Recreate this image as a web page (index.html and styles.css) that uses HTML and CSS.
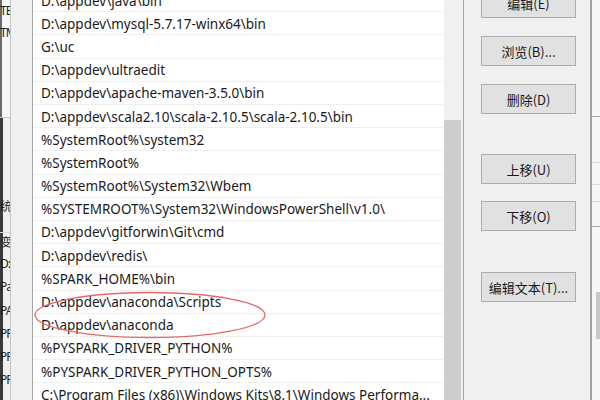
FILE: index.html
```html
<!DOCTYPE html>
<html>
<head>
<meta charset="utf-8">
<link rel="stylesheet" href="styles.css">
</head>
<body>
<div class="screen">
  <div class="bg-left">
    <div class="bl-top">
      <div class="bl-row">TE</div>
      <div class="bl-row">TM</div>
    </div>
    <div class="bl-mid">
      <div class="bl-label">统</div>
      <div class="bl-head">变</div>
      <div class="bl-row">D:</div>
      <div class="bl-row">Pa</div>
      <div class="bl-row">PA</div>
      <div class="bl-row">PF</div>
      <div class="bl-row">PF</div>
      <div class="bl-row">PF</div>
    </div>
  </div>
  <div class="dialog">
    <div class="pad"></div>
    <div class="listbox">
      <div class="rows">
        <div class="row">D:\appdev\java\bin</div>
        <div class="row">D:\appdev\mysql-5.7.17-winx64\bin</div>
        <div class="row">G:\uc</div>
        <div class="row">D:\appdev\ultraedit</div>
        <div class="row">D:\appdev\apache-maven-3.5.0\bin</div>
        <div class="row">D:\appdev\scala2.10\scala-2.10.5\scala-2.10.5\bin</div>
        <div class="row">%SystemRoot%\system32</div>
        <div class="row">%SystemRoot%</div>
        <div class="row">%SystemRoot%\System32\Wbem</div>
        <div class="row">%SYSTEMROOT%\System32\WindowsPowerShell\v1.0\</div>
        <div class="row">D:\appdev\gitforwin\Git\cmd</div>
        <div class="row">D:\appdev\redis\</div>
        <div class="row">%SPARK_HOME%\bin</div>
        <div class="row">D:\appdev\anaconda\Scripts</div>
        <div class="row">D:\appdev\anaconda</div>
        <div class="row">%PYSPARK_DRIVER_PYTHON%</div>
        <div class="row">%PYSPARK_DRIVER_PYTHON_OPTS%</div>
        <div class="row">C:\Program Files (x86)\Windows Kits\8.1\Windows Performa...</div>
      </div>
      <div class="scrollbar"><div class="thumb"></div></div>
    </div>
    <div class="side">
      <div class="btn b1">编辑(E)</div>
      <div class="btn b2">浏览(B)...</div>
      <div class="btn b3">删除(D)</div>
      <div class="btn b4">上移(U)</div>
      <div class="btn b5">下移(O)</div>
      <div class="btn b6">编辑文本(T)...</div>
    </div>
  </div>
  <div class="bg-right">
    <div class="br-a"></div>
    <div class="br-b"></div>
    <div class="br-c"></div>
    <div class="br-d"></div>
    <div class="br-e"></div>
    <div class="br-thumb"></div>
  </div>
  <svg class="mark" width="600" height="400" viewBox="0 0 600 400">
    <ellipse cx="150" cy="315" rx="115" ry="22.5" fill="none" stroke="#e46a6a" stroke-width="1.3"/>
  </svg>
</div>
</body>
</html>
```

FILE: styles.css
```css
* { box-sizing: border-box; margin: 0; padding: 0; }
html, body { width: 600px; height: 400px; overflow: hidden; background: #f0f0f0; }
body {
  font-family: "Noto Sans", "Noto Sans CJK SC", sans-serif;
  color: #1a1a1a;
}
.screen {
  position: relative;
  display: flex;
  width: 600px;
  height: 400px;
  overflow: hidden;
  background: #f0f0f0;
}

/* background window, left */
.bg-left {
  flex: none;
  width: 10px;
  height: 400px;
  overflow: hidden;
  display: flex;
  flex-direction: column;
  font-size: 12px;
  color: #222;
  white-space: nowrap;
  background: #f0f0f0;
}
.bl-top {
  height: 117px;
  flex: none;
  background: #f7f7f7;
  box-shadow: inset 2px 0 0 #6a6a6a;
}
.bl-row {
  height: 22px;
  line-height: 22px;
  flex: none;
  letter-spacing: -1px;
}
.bl-mid {
  border-top: 1px solid #c8c8c8;
  flex: 1;
  display: flex;
  flex-direction: column;
  box-shadow: inset 3px 0 0 #3a3a3a;
}
.bl-label {
  margin-top: 80px;
  height: 18px;
  line-height: 18px;
}
.bl-head {
  margin-top: 16px;
  height: 20px;
  line-height: 20px;
  border-top: 1px solid #d8d8d8;
}
.bl-mid .bl-row { height: 23.3px; line-height: 23.3px; }

/* front dialog */
.dialog {
  flex: none;
  width: 582px;
  height: 400px;
  display: flex;
  background: #f0f0f0;
  border-left: 1px solid #c4c4c4;
  border-right: 2px solid #a2a2a2;
}
.pad { flex: none; width: 21px; }
.listbox {
  flex: none;
  width: 432px;
  display: flex;
  background: #fff;
  border-left: 1px solid #a6a6a6;
  border-right: 1px solid #a6a6a6;
}
.rows {
  flex: none;
  width: 411px;
  margin-top: -10.9px;
  display: flex;
  flex-direction: column;
}
.row {
  flex: none;
  height: 23.2px;
  line-height: 21px;
  padding: 1.5px 6px 0 8px;
  border-bottom: 1px solid #efefef;
  font-size: 13.5px;
  white-space: nowrap;
  overflow: hidden;
}
.scrollbar {
  flex: none;
  width: 19px;
  background: #f0f0f0;
  padding: 120px 2px 0 0;
  display: flex;
}
.thumb {
  flex: 1;
  background: #cdcdcd;
}

.side {
  flex: none;
  width: 126px;
  padding-left: 17px;
  display: flex;
  flex-direction: column;
}
.btn {
  flex: none;
  width: 95px;
  height: 30px;
  background: #e1e1e1;
  border: 1px solid #adadad;
  display: flex;
  align-items: center;
  justify-content: center;
  font-family: "Noto Sans CJK SC", sans-serif;
  font-size: 13px;
  color: #1a1a1a;
}
.b1 { margin-top: -12px; }
.b2 { margin-top: 18px; }
.b3 { margin-top: 18px; }
.b4 { margin-top: 40px; }
.b5 { margin-top: 17px; }
.b6 { margin-top: 41px; }

/* background window, right */
.bg-right {
  flex: none;
  width: 8px;
  height: 400px;
  background: #f6f6f6;
  display: flex;
  flex-direction: column;
}
.br-a { height: 117px; border-bottom: 1px solid #a8a8a8; flex: none; }
.br-b { height: 46px; border-bottom: 1px solid #dcdcdc; flex: none; }
.br-c { height: 22px; border-bottom: 1px solid #dcdcdc; flex: none; }
.br-d { height: 17px; border-bottom: 1px solid #dcdcdc; flex: none; }
.br-e { height: 25px; border-bottom: 1px solid #a8a8a8; flex: none; }
.br-thumb {
  margin-top: 65px;
  margin-left: 4px;
  width: 4px;
  height: 47px;
  background: #c8c8c8;
}

.mark {
  position: absolute;
  left: 0;
  top: 0;
  pointer-events: none;
}
```
